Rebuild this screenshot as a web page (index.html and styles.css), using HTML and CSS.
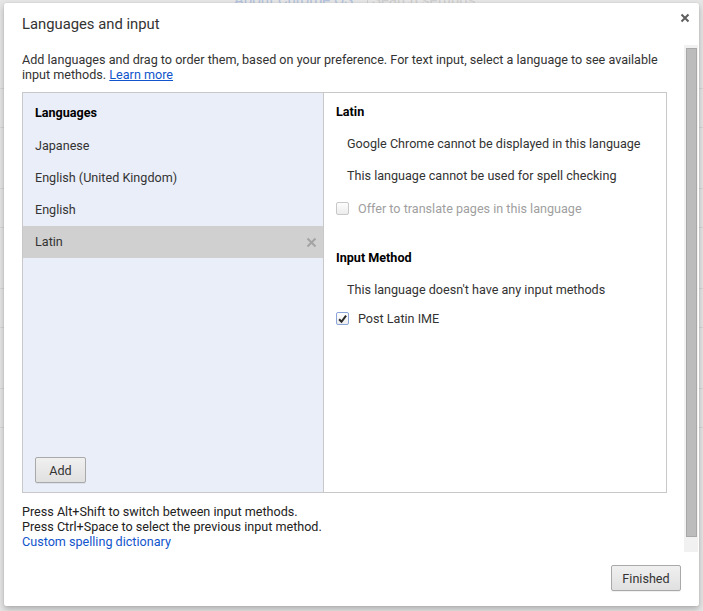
FILE: index.html
```html
<!DOCTYPE html>
<html>
<head>
<meta charset="utf-8">
<link rel="stylesheet" href="styles.css">
</head>
<body>
<div class="page">
  <div class="page-top">
    <span class="bg-link">About Chrome OS</span>
    <span class="bg-search">Search settings</span>
  </div>
  <div class="bg-rows">
    <div class="bg-row"></div>
    <div class="bg-row"></div>
    <div class="bg-row"></div>
    <div class="bg-row"></div>
  </div>
</div>
<div class="dialog">
  <div class="dlg-header">
    <h1 class="dlg-title">Languages and input</h1>
    <span class="dlg-close">
      <svg width="10" height="10" viewBox="0 0 10 10"><path d="M1.5 1.5 L8.5 8.5 M8.5 1.5 L1.5 8.5" stroke="#5f5f5f" stroke-width="2"/></svg>
    </span>
  </div>
  <div class="dlg-body">
    <div class="dlg-content">
      <p class="desc">Add languages and drag to order them, based on your preference. For text input, select a language to see available input methods. <a class="link u" href="#">Learn more</a></p>
      <div class="panel">
        <div class="lang-pane">
          <div class="lang-head">Languages</div>
          <div class="lang-list">
            <div class="lang-row">Japanese</div>
            <div class="lang-row">English (United Kingdom)</div>
            <div class="lang-row">English</div>
            <div class="lang-row selected">Latin
              <span class="row-x"><svg width="11" height="11" viewBox="0 0 11 11"><path d="M1.5 1.5 L9.5 9.5 M9.5 1.5 L1.5 9.5" stroke="#a3a3a3" stroke-width="2"/></svg></span>
            </div>
          </div>
          <div class="lang-foot"><button class="btn">Add</button></div>
        </div>
        <div class="detail-pane">
          <div class="d-head">Latin</div>
          <div class="d-line">Google Chrome cannot be displayed in this language</div>
          <div class="d-line">This language cannot be used for spell checking</div>
          <label class="d-check disabled"><span class="cb"></span>Offer to translate pages in this language</label>
          <div class="d-head second">Input Method</div>
          <div class="d-line">This language doesn't have any input methods</div>
          <label class="d-check checked"><span class="cb on"><svg width="12" height="12" viewBox="0 0 12 12"><path d="M2.3 6.3 L4.9 9 L9.9 2.4" stroke="#2a2a2a" stroke-width="2.2" fill="none"/></svg></span>Post Latin IME</label>
        </div>
      </div>
      <div class="footer-text">
        <div>Press Alt+Shift to switch between input methods.</div>
        <div>Press Ctrl+Space to select the previous input method.</div>
        <div><a class="link" href="#">Custom spelling dictionary</a></div>
      </div>
    </div>
    <div class="scrollbar"><div class="thumb"></div></div>
  </div>
  <div class="dlg-footer"><button class="btn finished">Finished</button></div>
</div>
</body>
</html>
```
FILE: styles.css
```css
html, body {
  margin: 0;
  padding: 0;
}
body {
  width: 703px;
  height: 611px;
  overflow: hidden;
  background: #e6e6e6;
  font-family: Roboto, "Liberation Sans", sans-serif;
  font-size: 12.6px;
  color: #333;
  position: relative;
}
.page {
  height: 611px;
}
.page-top {
  height: 8px;
  position: relative;
  font-size: 15px;
  overflow: hidden;
}
.bg-link {
  position: absolute;
  left: 234px;
  top: -9px;
  color: #b4c3de;
}
.bg-search {
  position: absolute;
  left: 367px;
  top: -9px;
  color: #cfcfcf;
  padding-left: 4px;
  border-left: 1px solid #d0d0d0;
}
.bg-rows {
  padding-top: 20px;
}
.bg-row {
  height: 38px;
  margin-top: 60px;
  border-top: 1px solid #d6d6d6;
  border-bottom: 1px solid #d6d6d6;
}
.dialog {
  position: absolute;
  left: 4px;
  top: 3px;
  width: 695px;
  height: 603px;
  background: #fff;
  border-radius: 2px;
  box-shadow: 0 3px 6px rgba(0,0,0,0.25), 0 0 1px rgba(0,0,0,0.2);
  display: flex;
  flex-direction: column;
}
.dlg-header {
  height: 42px;
  display: flex;
  align-items: flex-start;
  justify-content: space-between;
  flex: none;
}
.dlg-title {
  margin: 12px 0 0 18px;
  font-size: 14.8px;
  font-weight: normal;
  color: #333;
  line-height: 18px;
}
.dlg-close {
  margin: 10px 9px 0 0;
  display: flex;
}
.dlg-body {
  height: 507px;
  display: flex;
  flex: none;
}
.dlg-content {
  flex: 1;
  padding: 7px 17px 0 18px;
}
.desc {
  margin: 0;
  line-height: 15px;
}
.link {
  color: #15c;
  text-decoration: none;
}
.link.u {
  text-decoration: underline;
}
.panel {
  margin-top: 10px;
  height: 399px;
  border: 1px solid #c8c8c8;
  display: flex;
}
.lang-pane {
  width: 300px;
  background: #eaeef9;
  border-right: 1px solid #c8c8c8;
  display: flex;
  flex-direction: column;
}
.lang-head {
  font-weight: bold;
  color: #000;
  padding: 12px 12px 0;
  line-height: 15px;
  height: 25px;
}
.lang-list {
  flex: 1;
}
.lang-row {
  height: 32px;
  line-height: 32px;
  padding: 0 12px;
  display: flex;
  align-items: center;
  justify-content: space-between;
}
.lang-row.selected {
  background: #d0d0d0;
}
.row-x {
  display: flex;
  margin-right: -6px;
}
.lang-foot {
  padding: 0 0 9px 12px;
}
.btn {
  font-family: Roboto, "Liberation Sans", sans-serif;
  font-size: 12.6px;
  color: #333;
  height: 26px;
  padding: 0 12px;
  border: 1px solid #a9a9a9;
  border-radius: 2px;
  background: linear-gradient(#f0f0f0, #e0e0e0);
  box-shadow: 0 1px 0 rgba(0,0,0,0.06);
}
.lang-foot .btn {
  width: 51px;
}
.detail-pane {
  flex: 1;
  padding: 11px 12px 0;
}
.d-head {
  font-weight: bold;
  color: #000;
  line-height: 15px;
}
.d-head.second {
  margin-top: 34px;
}
.d-line {
  margin-top: 17px;
  padding-left: 11px;
  line-height: 15px;
}
.d-check {
  display: flex;
  align-items: center;
  margin-top: 18px;
  line-height: 15px;
}
.d-check.checked {
  margin-top: 14px;
}
.d-check.disabled {
  color: #a0a0a0;
}
.cb {
  width: 11px;
  height: 11px;
  border: 1px solid #c8c8c8;
  border-radius: 2px;
  background: linear-gradient(#fdfdfd, #ececec);
  margin-right: 9px;
  display: flex;
  align-items: center;
  justify-content: center;
}
.cb.on {
  border-color: #8aa4d8;
  background: linear-gradient(#fff, #ededed);
}
.footer-text {
  margin-top: 11px;
  line-height: 15px;
  color: #222;
}
.scrollbar {
  width: 14px;
  background: #f1f1f1;
  margin-right: 1px;
  padding: 3px 1px 0 2px;
  box-sizing: border-box;
  flex: none;
}
.thumb {
  height: 489px;
  background: #bcbcbc;
  border: 1px solid #a8a8a8;
  box-sizing: border-box;
}
.dlg-footer {
  flex: 1;
  display: flex;
  justify-content: flex-end;
  align-items: flex-start;
  padding: 13px 18px 0 0;
}
.btn.finished {
  width: 70px;
  padding: 0;
}
```
